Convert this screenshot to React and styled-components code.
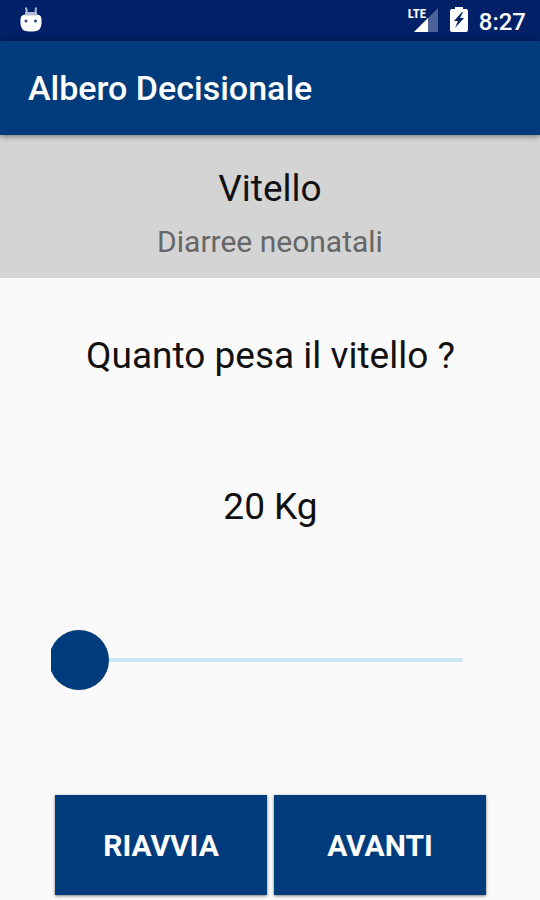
import React, { useState } from "react";
import styled, { createGlobalStyle } from "styled-components";

const navy = "#003c7c";

const GlobalStyle = createGlobalStyle`
  *, *::before, *::after { box-sizing: border-box; }
  body {
    margin: 0;
    background: #fafafa;
    font-family: Roboto, "Liberation Sans", sans-serif;
    color: #111;
  }
`;

const Screen = styled.div`
  display: flex;
  flex-direction: column;
  min-height: 100vh;
`;

const StatusBar = styled.div`
  display: flex;
  align-items: flex-start;
  justify-content: space-between;
  height: 41px;
  padding: 7px 14px 0 20px;
  background: #002068;
  color: #fff;
`;

const StatusGroup = styled.div`
  display: flex;
  align-items: flex-start;
  gap: 11px;
`;

const Signal = styled.div`
  display: grid;
`;

const SignalIcon = styled.svg`
  grid-area: 1 / 1;
`;

const NetworkLabel = styled.span`
  grid-area: 1 / 1;
  font-family: "Roboto Condensed", Roboto, sans-serif;
  font-size: 13px;
  font-weight: 700;
  line-height: 14px;
`;

const Clock = styled.time`
  font-size: 24px;
  font-weight: 500;
  line-height: 30px;
`;

const AppBar = styled.header`
  display: flex;
  align-items: center;
  height: 94px;
  padding: 0 28px;
  background: ${navy};
  color: #fff;
  box-shadow: 0 1px 6px rgba(0, 0, 0, 0.5);
  z-index: 1;
`;

const AppTitle = styled.h1`
  margin: 0;
  font-size: 34px;
  font-weight: 500;
  line-height: 42px;
`;

const Subject = styled.section`
  display: flex;
  flex-direction: column;
  align-items: center;
  gap: 12px;
  padding: 31px 16px 18px;
  background: #d4d4d4;
`;

const SubjectName = styled.h2`
  margin: 0;
  font-size: 37px;
  font-weight: 400;
  line-height: 46px;
`;

const SubjectTopic = styled.p`
  margin: 0;
  font-size: 30px;
  line-height: 36px;
  color: #666;
`;

const Form = styled.form`
  display: flex;
  flex-direction: column;
  flex: 1;
  padding: 55px 54px 5px 55px;
`;

const Question = styled.label`
  font-size: 37px;
  line-height: 46px;
  text-align: center;
`;

const Weight = styled.output`
  margin-top: 105px;
  font-size: 37px;
  line-height: 46px;
  text-align: center;
`;

const Slider = styled.input`
  appearance: none;
  height: 60px;
  margin: 100px 23px 0 -6px;
  background: transparent;
  clip-path: inset(0 0 0 2px);
  cursor: pointer;

  &::-webkit-slider-runnable-track {
    height: 4px;
    border-radius: 2px;
    background: #c9e7f3;
  }

  &::-webkit-slider-thumb {
    appearance: none;
    width: 60px;
    height: 60px;
    margin-top: -28px;
    border-radius: 50%;
    background: ${navy};
  }
`;

const Actions = styled.div`
  display: grid;
  grid-template-columns: 1fr 1fr;
  gap: 7px;
  margin-top: auto;
`;

const ActionButton = styled.button`
  height: 100px;
  padding: 2px 0 0;
  border: 0;
  background: ${navy};
  color: #fff;
  font: 700 30px/36px Roboto, "Liberation Sans", sans-serif;
  text-transform: uppercase;
  box-shadow: 0 1px 3px rgba(0, 0, 0, 0.5);
  cursor: pointer;
`;

function RobotIcon() {
  return (
    <svg width="22" height="25" viewBox="0 0 22 25" aria-hidden="true">
      <path d="M6 0.5L7 6M16 0.5L15.500 6" stroke="#b3bad8" strokeWidth="2" />
      <path d="M3 8Q11 6 19 8Q21.500 9 21.500 12v5Q21 24.500 13 24.500H9Q1 24.500 0.500 17v-5Q0.500 9 3 8z" fill="#fff" />
      <path d="M5 5h12v3.500H5z" fill="#b3bad8" />
      <circle cx="6" cy="14" r="1.500" fill="#34477f" />
      <circle cx="15.500" cy="14" r="1.500" fill="#34477f" />
    </svg>
  );
}

function SignalStrength() {
  return (
    <Signal>
      <SignalIcon width="31" height="25" viewBox="0 0 31 25" aria-hidden="true">
        <path d="M30 1v24H6z" fill="#4c6398" />
        <path d="M20 11v14H6z" fill="#fff" />
      </SignalIcon>
      <NetworkLabel>LTE</NetworkLabel>
    </Signal>
  );
}

function BatteryIcon() {
  return (
    <svg width="18" height="25" viewBox="0 0 18 25" aria-hidden="true">
      <path d="M5 0h8v2h3q2 0 2 2v19q0 2-2 2H2q-2 0-2-2V4q0-2 2-2h3z" fill="#fff" />
      <path d="M12 5L4 14h4l-3 7 9-10h-4l3-6z" fill="#002068" />
    </svg>
  );
}

export default function App() {
  const [weight, setWeight] = useState(20);

  return (
    <>
      <GlobalStyle />
      <Screen>
        <StatusBar>
          <RobotIcon />
          <StatusGroup>
            <SignalStrength />
            <BatteryIcon />
            <Clock>8:27</Clock>
          </StatusGroup>
        </StatusBar>
        <AppBar>
          <AppTitle>Albero Decisionale</AppTitle>
        </AppBar>
        <Subject>
          <SubjectName>Vitello</SubjectName>
          <SubjectTopic>Diarree neonatali</SubjectTopic>
        </Subject>
        <Form onSubmit={(event) => event.preventDefault()}>
          <Question htmlFor="weight">Quanto pesa il vitello ?</Question>
          <Weight htmlFor="weight">{weight} Kg</Weight>
          <Slider
            id="weight"
            type="range"
            min="20"
            max="80"
            value={weight}
            onChange={(event) => setWeight(Number(event.target.value))}
          />
          <Actions>
            <ActionButton type="button" onClick={() => setWeight(20)}>Riavvia</ActionButton>
            <ActionButton type="submit">Avanti</ActionButton>
          </Actions>
        </Form>
      </Screen>
    </>
  );
}
